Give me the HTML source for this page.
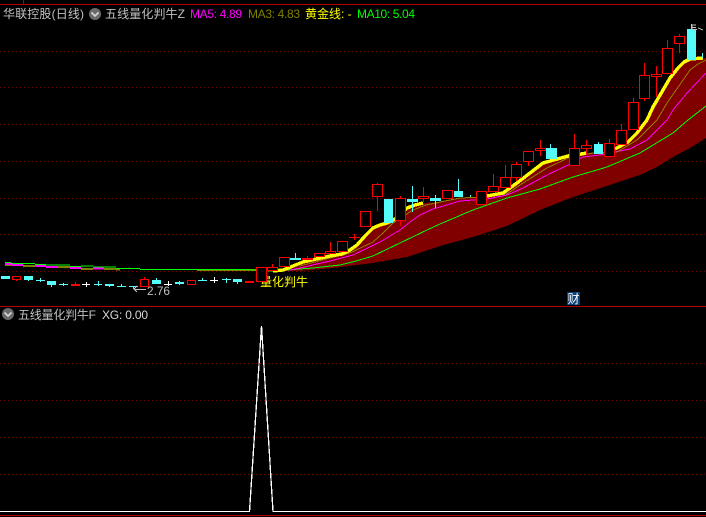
<!DOCTYPE html>
<html><head><meta charset="utf-8">
<style>
html,body{margin:0;padding:0;background:#000;width:706px;height:517px;overflow:hidden}
svg{display:block;position:absolute;left:0;top:0}
text{font-family:"Liberation Sans","WenQuanYi Zen Hei","Noto Sans CJK SC",sans-serif;font-size:12px}
.c{shape-rendering:crispEdges}
</style></head><body>
<svg width="706" height="517" viewBox="0 0 706 517">
<rect width="706" height="517" fill="#000"/>
<g class="c" fill="none">
<path d="M0 4.5H706M23.5 0V4M0 306.5H706M0 515.5H706" stroke="#b00000"/>
<g stroke="#700000" stroke-dasharray="1 3">
<path d="M0 51.5H706M0 87.5H706M0 124.5H706M0 161.5H706M0 198.5H706M0 234.5H706M0 271.5H706"/>
<path d="M0 363.5H706M0 400.5H706M0 437.5H706M0 474.5H706"/>
</g>
</g>

<!-- area -->
<polygon class="c" fill="#800000" points="273,271 283,270 293,266 303,262 316,259 330,256 342,254 350,250 357,245 365,236 373,228 380,225 387,223 397,218 402,212 407,208 415,205 423,203 440,202 460,198 487,196 503,193 517,183 530,173 543,163 568,156 587,153 617,150 628,142 637,133 647,120 653,107 663,90 670,78 678,68 684,62 690,59 706,58 706,138 690,148 673,157 657,167 640,175 607,186 573,197 540,210 507,226 473,237 440,246 407,257 373,263 333,268 300,271"/>

<!-- left flat lines -->
<g fill="none" class="c">
<path stroke="#808000" stroke-width="2" d="M5 265H11M23 266H35M58 267H70M81 269H93M104 269H116M116 269.5H120M197 270H256"/>
<path stroke="#00ff00" stroke-width="1.4" d="M5 262.5H11M11 263.5H35M35 264.5H46M46 265H70M70 266.5H81M81 266H93M93 267H116M116 268.5H140M140 269.5H250"/>
<path stroke="#ff00ff" stroke-width="2" d="M5 264H11M11 265H23M35 266H46M46 267H58M70 268H81M93 268.5H104"/>
</g>

<!-- curves -->
<g class="c" fill="none">
<polyline stroke="#00ff00" stroke-width="1" points="250,270 273,271 313,268 340,265 356,261 373,256 400,243 427,230 440,224 473,210 507,198 540,189 573,177 607,167 640,153 673,133 688,120 706,106"/>
<polyline stroke="#ff00ff" stroke-width="1" points="290,270 300,268 330,261 353,255 380,242 400,230 410,222 420,215 433,209 440,207 460,201 487,199 507,195 523,188 547,175 568,165 583,157 600,155 630,149 647,140 667,120 673,110 687,93 706,73"/>
<polyline stroke="#908000" stroke-width="1" points="300,266 330,258 350,253 373,242 383,233 393,223 413,210 426,205 440,202 460,198 483,197 507,194 523,183 547,168 568,158 593,153 617,152 637,140 657,120 667,103 690,70 698,64 706,60"/>
<g stroke="#ffff00" stroke-width="3.4">
<polyline points="273,271 283,270 293,266 303,262 316,259 330,256 342,254 350,250 357,245 365,236 373,228 380,225 387,223 397,218 402,212 407,208 415,205 423,203"/>
<polyline points="487,196 503,193 517,183 530,173 543,163 568,156 587,153"/>
<polyline points="615,149 628,142 637,133 647,120 653,107 663,90 670,78 678,68 684,62 690,59 703,58"/>
</g>
</g>

<text x="260" y="286" fill="#ffff00">量化判牛</text>

<!-- wicks red -->
<g class="c" fill="none" stroke="#ff0000">
<path d="M16.5 279V281M75.5 282V285M144.5 277V279M272.5 264V267M307.5 256V260M330.5 242V251M354.5 234V240M377.5 183V184M377.5 197V211M400.5 196V198M400.5 221V226M423.5 187V202M493.5 174V186M505.5 165V177M516.5 162V164M516.5 178V181M528.5 162V166M540.5 140V156M574.5 134V148M586.5 140V155M609.5 139V143M621.5 124V130M633.5 98V102M644.5 63V75M644.5 99V101M656.5 66V97M667.5 40V48M679.5 34V36M679.5 44V53"/>
</g>
<!-- red filled / dash bodies -->
<g class="c" fill="#ff0000">
<rect x="71" y="284" width="9" height="2"/><rect x="245" y="281" width="9" height="2"/>
<rect x="302" y="258" width="11" height="2"/><rect x="349" y="237" width="11" height="1"/>
</g>
<!-- red hollow -->
<g class="c" fill="#000" stroke="#ff0000">
<rect x="12.5" y="276.5" width="8" height="3"/>
<rect x="140.5" y="279.5" width="8" height="7"/>
<rect x="187.5" y="280.5" width="8" height="4"/>
<rect x="256.5" y="267.5" width="10" height="14"/>
<rect x="267.5" y="267.5" width="10" height="3"/>
<rect x="279.5" y="257.5" width="10" height="9"/>
<rect x="314.5" y="253.5" width="10" height="3"/>
<rect x="325.5" y="251.5" width="10" height="2"/>
<rect x="337.5" y="241.5" width="10" height="10"/>
<rect x="360.5" y="211.5" width="10" height="15"/>
<rect x="372.5" y="184.5" width="10" height="12"/>
<rect x="395.5" y="198.5" width="10" height="22"/>
<rect x="418.5" y="196.5" width="10" height="2"/>
<rect x="442.5" y="190.5" width="10" height="8"/>
<rect x="476.5" y="191.5" width="10" height="13"/>
<rect x="488.5" y="186.5" width="10" height="5"/>
<rect x="500.5" y="177.5" width="10" height="10"/>
<rect x="511.5" y="164.5" width="10" height="13"/>
<rect x="523.5" y="151.5" width="10" height="10"/>
<rect x="535.5" y="148.5" width="10" height="2"/>
<rect x="569.5" y="148.5" width="10" height="17"/>
<rect x="581.5" y="145.5" width="10" height="3"/>
<rect x="604.5" y="143.5" width="10" height="13"/>
<rect x="616.5" y="130.5" width="10" height="14"/>
<rect x="628.5" y="102.5" width="10" height="27"/>
<rect x="639.5" y="75.5" width="10" height="23"/>
<rect x="651.5" y="74.5" width="10" height="2"/>
<rect x="662.5" y="48.5" width="10" height="25"/>
<rect x="674.5" y="36.5" width="10" height="7"/>
</g>
<!-- cyan -->
<g class="c" fill="#54fcfc">
<rect x="1" y="276" width="9" height="3"/>
<rect x="24" y="276" width="9" height="4"/>
<rect x="47" y="281" width="9" height="4"/>
<rect x="105" y="284" width="9" height="2"/>
<rect x="152" y="280" width="9" height="4"/>
<rect x="175" y="282" width="9" height="2"/>
<rect x="233" y="279" width="9" height="3"/>
<rect x="290" y="258" width="11" height="2"/>
<rect x="384" y="199" width="9" height="24"/>
<rect x="407" y="199" width="11" height="3"/>
<rect x="430" y="198" width="11" height="3"/>
<rect x="454" y="191" width="9" height="6"/>
<rect x="546" y="148" width="11" height="11"/>
<rect x="594" y="144" width="9" height="10"/>
<rect x="687" y="29" width="9" height="31"/>
</g>
<g class="c" fill="none" stroke="#54fcfc">
<path d="M28.5 280V281M40.5 278V282M36 280.5H45M51.5 285V287M63.5 283V286M59 284.5H68M98.5 281V286M94 284.5H102M109.5 286V287M121.5 284V287M117 286.5H126M133.5 286V289M129 286.5H138M156.5 278V280M179.5 281V285M202.5 278V281M198 280.5H207M226.5 278V283M222 279.5H231M237.5 282V284M295.5 253V258M412.5 186V212M435.5 195V208M458.5 179V191M470.5 195V197M550.5 144V148M598.5 142V144M691.5 24V29M702.5 53V58"/>
</g>
<g class="c" fill="none" stroke="#fff">
<path d="M168.5 281V286M164 284.5H172M86.5 282V287M82 284.5H90M214.5 277V283M210 280.5H218"/>
</g>
<path class="c" fill="none" stroke="#ff0000" d="M349 237.5H360M354.5 234V240"/>

<!-- top number stub -->
<path class="c" fill="none" stroke="#c0c0c0" d="M692 30V25H696M692 27.5H696M692 29.5H697M698 28L703 30"/>

<!-- low annotation -->
<path class="c" fill="none" stroke="#c0c0c0" d="M146 289.5H134M137 286L134 289L137 292"/>
<text x="147" y="295" fill="#c0c0c0" textLength="23" lengthAdjust="spacingAndGlyphs">2.76</text>

<!-- badge -->
<rect x="567" y="292" width="13" height="13" fill="#0a3f78"/>
<text x="567.5" y="303" fill="#fff">财</text>

<!-- header -->
<text x="3" y="18" fill="#c0c0c0" textLength="81">华联控股(日线)</text>
<circle cx="95" cy="14" r="6" fill="#6a6a6a"/>
<path d="M91.5 12.5L95 16L98.5 12.5" fill="none" stroke="#d8d8d8" stroke-width="1.6"/>
<text x="105" y="18" fill="#c0c0c0" textLength="80">五线量化判牛Z</text>
<text x="190" y="18" fill="#ff00ff" textLength="52">MA5: 4.89</text>
<text x="248" y="18" fill="#808000" textLength="52">MA3: 4.83</text>
<text x="305" y="18" fill="#ffff00">黄金线: -</text>
<text x="357" y="18" fill="#00ff00" textLength="58">MA10: 5.04</text>

<circle cx="8" cy="314" r="6" fill="#6a6a6a"/>
<path d="M4.5 312.5L8 316L11.5 312.5" fill="none" stroke="#d8d8d8" stroke-width="1.6"/>
<text x="18" y="319" fill="#c0c0c0" textLength="78">五线量化判牛F</text>
<text x="102" y="319" fill="#d8d8d8" textLength="46">XG: 0.00</text>

<!-- lower indicator -->
<polyline class="c" fill="none" stroke="#fff" stroke-width="1.3" points="0,511.5 249.5,511.5 261.5,326 273,511.5 706,511.5"/>
</svg>
</body></html>
